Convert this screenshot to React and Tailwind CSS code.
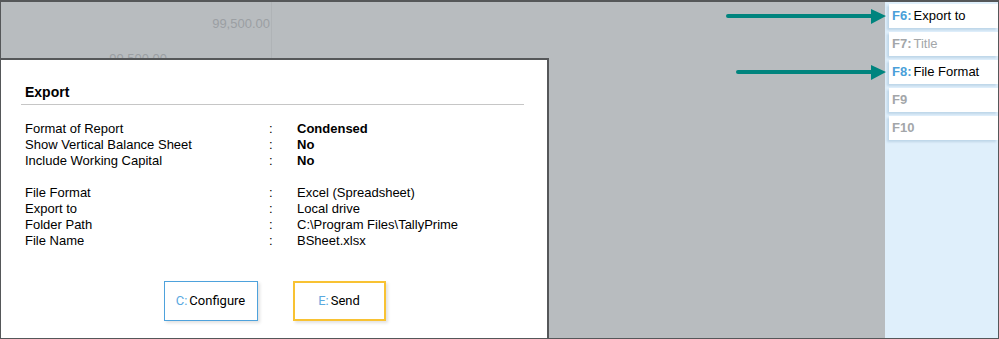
export default function App() {
  const rowsA = [
    ['Format of Report', 'Condensed'],
    ['Show Vertical Balance Sheet', 'No'],
    ['Include Working Capital', 'No'],
  ];
  const rowsB = [
    ['File Format', 'Excel (Spreadsheet)'],
    ['Export to', 'Local drive'],
    ['Folder Path', 'C:\\Program Files\\TallyPrime'],
    ['File Name', 'BSheet.xlsx'],
  ];
  const keys = [
    { k: 'F6:', label: 'Export to', on: true },
    { k: 'F7:', label: 'Title', on: false },
    { k: 'F8:', label: 'File Format', on: true },
    { k: 'F9', label: '', on: false },
    { k: 'F10', label: '', on: false },
  ];

  return (
    <div
      className="relative w-[999px] h-[339px] overflow-hidden border border-t-2 border-[#555759] flex text-[13px] text-black"
      style={{ fontFamily: '"Liberation Sans", Arial, sans-serif' }}
    >
      {/* report area behind the dialog */}
      <div className="flex-1 flex flex-col bg-[#b8bcbf]">
        <div className="h-[56px] flex overflow-hidden">
          <div className="w-[271px] border-r border-[#afb3b6] relative">
            <div className="text-right pr-[1px] pt-[14px] text-[#9b9fa3] leading-[16px]">99,500.00</div>
            <div className="text-right pr-[104px] pt-[19px] text-[#9b9fa3] leading-[16px]">99,500.00</div>
          </div>
        </div>

        <div className="w-[548px] flex-1 bg-white border-t-2 border-r-2 border-[#555759] pl-[20px] pr-[23px] pt-[24px]">
          <div className="pl-[4px] pb-[4px] font-bold text-[14px] leading-[16px] border-b border-[#c6c6c6]">Export</div>

          <div className="pl-[4px] pt-[16px] leading-[16px]">
            {rowsA.map(([l, v]) => (
              <div key={l} className="flex">
                <div className="w-[244px]">{l}</div>
                <div className="w-[28px]">:</div>
                <div className="font-bold">{v}</div>
              </div>
            ))}
            <div className="h-[16px]" />
            {rowsB.map(([l, v]) => (
              <div key={l} className="flex">
                <div className="w-[244px]">{l}</div>
                <div className="w-[28px]">:</div>
                <div>{v}</div>
              </div>
            ))}
          </div>

          <div className="flex justify-center gap-[35px] pt-[32px] pl-[4px]" style={{ fontFamily: 'Roboto, "Liberation Sans", sans-serif' }}>
            <div className="w-[94px] h-[40px] flex items-center justify-center border border-[#4ea2dc] shadow-[2px_2px_3px_rgba(0,0,0,0.12)]">
              <span className="text-[#5aa9df] mr-[2px]">C:</span>
              <span>Configure</span>
            </div>
            <div className="w-[93px] h-[40px] flex items-center justify-center border-2 border-[#f8c233] shadow-[2px_2px_3px_rgba(0,0,0,0.12)]">
              <span className="text-[#5aa9df] mr-[2px]">E:</span>
              <span>Send</span>
            </div>
          </div>
        </div>
      </div>

      {/* button bar */}
      <div className="w-[113px] bg-[#dfeffb] pl-[4px] pt-[2px] flex flex-col gap-[4px]">
        {keys.map((b) => (
          <div
            key={b.k}
            className="h-[24px] bg-white flex items-center pl-[3px] shadow-[-2px_2px_2px_rgba(150,185,210,0.45)]"
          >
            <span className={'font-bold mr-[2px] ' + (b.on ? 'text-[#4a9fd9]' : 'text-[#a3a6a9]')}>{b.k}</span>
            <span className={b.on ? 'text-black' : 'text-[#a3a6a9]'}>{b.label}</span>
          </div>
        ))}
      </div>

      {/* callout arrows */}
      <svg className="absolute left-0 top-0 pointer-events-none" width="999" height="339">
        <line x1="727" y1="14" x2="872" y2="14" stroke="#00847e" strokeWidth="4" strokeLinecap="round" />
        <polygon points="870,7 885,14 870,22" fill="#00847e" />
        <line x1="737" y1="70" x2="872" y2="70" stroke="#00847e" strokeWidth="4" strokeLinecap="round" />
        <polygon points="870,63 885,70 870,78" fill="#00847e" />
      </svg>
    </div>
  );
}
